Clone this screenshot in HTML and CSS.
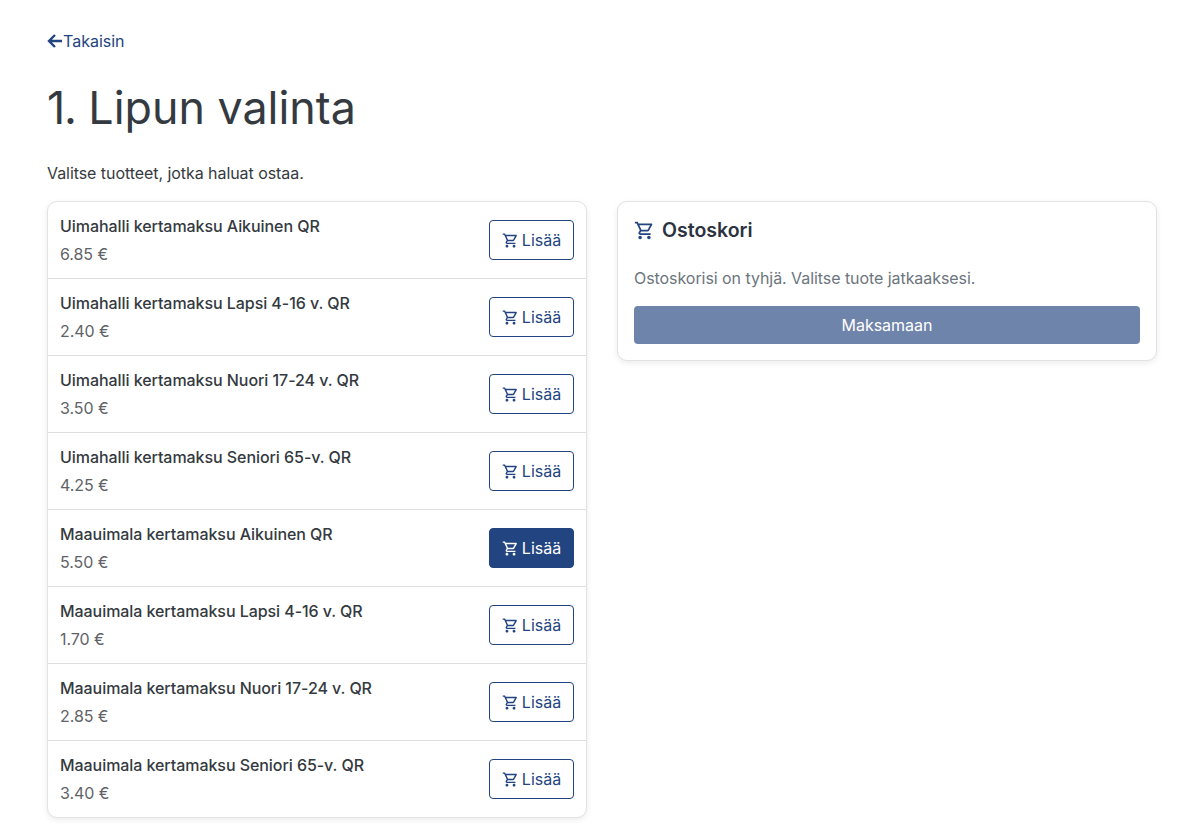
FILE: index.html
```html
<!DOCTYPE html>
<html lang="fi">
<head>
  <meta charset="UTF-8">
  <meta name="viewport" content="width=device-width, initial-scale=1.0">
  <title>Lipun valinta</title>
  <link rel="stylesheet" href="styles.css">
</head>
<body>
  <svg class="icon-defs" width="0" height="0" aria-hidden="true">
    <symbol id="cart" viewBox="0 0 24 24">
      <path d="M15.55 13c.75 0 1.41-.41 1.75-1.03l3.58-6.49c.37-.66-.11-1.48-.87-1.48H5.21l-.94-2H1v2h2l3.6 7.59-1.35 2.44C4.52 15.37 5.48 17 7 17h12v-2H7l1.1-2h7.45zM6.16 6h12.15l-2.76 5H8.53L6.16 6zM7 18c-1.1 0-1.99.9-1.99 2S5.9 22 7 22s2-.9 2-2-.9-2-2-2zm10 0c-1.1 0-1.99.9-1.99 2s.89 2 1.99 2 2-.9 2-2-.9-2-2-2z"/>
    </symbol>
  </svg>

  <main class="page">
    <a href="#" class="back-link">
      <svg class="back-icon" viewBox="0 0 16 16"><path d="M15 8H2M8 2L2 8l6 6"/></svg>
      Takaisin
    </a>

    <h1><span class="step-number">1.</span> Lipun valinta</h1>
    <p class="intro">Valitse tuotteet, jotka haluat ostaa.</p>

    <div class="columns">
      <ul class="card product-list">
        <li class="product">
          <div><div class="product-name">Uimahalli kertamaksu Aikuinen QR</div><div class="product-price">6.85 €</div></div>
          <button class="add-button"><svg class="cart-icon"><use href="#cart"/></svg>Lisää</button>
        </li>
        <li class="product">
          <div><div class="product-name">Uimahalli kertamaksu Lapsi 4-16 v. QR</div><div class="product-price">2.40 €</div></div>
          <button class="add-button"><svg class="cart-icon"><use href="#cart"/></svg>Lisää</button>
        </li>
        <li class="product">
          <div><div class="product-name">Uimahalli kertamaksu Nuori 17-24 v. QR</div><div class="product-price">3.50 €</div></div>
          <button class="add-button"><svg class="cart-icon"><use href="#cart"/></svg>Lisää</button>
        </li>
        <li class="product">
          <div><div class="product-name">Uimahalli kertamaksu Seniori 65-v. QR</div><div class="product-price">4.25 €</div></div>
          <button class="add-button"><svg class="cart-icon"><use href="#cart"/></svg>Lisää</button>
        </li>
        <li class="product">
          <div><div class="product-name">Maauimala kertamaksu Aikuinen QR</div><div class="product-price">5.50 €</div></div>
          <button class="add-button add-button-active"><svg class="cart-icon"><use href="#cart"/></svg>Lisää</button>
        </li>
        <li class="product">
          <div><div class="product-name">Maauimala kertamaksu Lapsi 4-16 v. QR</div><div class="product-price">1.70 €</div></div>
          <button class="add-button"><svg class="cart-icon"><use href="#cart"/></svg>Lisää</button>
        </li>
        <li class="product">
          <div><div class="product-name">Maauimala kertamaksu Nuori 17-24 v. QR</div><div class="product-price">2.85 €</div></div>
          <button class="add-button"><svg class="cart-icon"><use href="#cart"/></svg>Lisää</button>
        </li>
        <li class="product">
          <div><div class="product-name">Maauimala kertamaksu Seniori 65-v. QR</div><div class="product-price">3.40 €</div></div>
          <button class="add-button"><svg class="cart-icon"><use href="#cart"/></svg>Lisää</button>
        </li>
      </ul>

      <section class="card basket">
        <h2><svg class="basket-icon"><use href="#cart"/></svg>Ostoskori</h2>
        <p class="basket-empty">Ostoskorisi on tyhjä. Valitse tuote jatkaaksesi.</p>
        <button class="pay-button">Maksamaan</button>
      </section>
    </div>
  </main>
</body>
</html>
```

FILE: styles.css
```css
* {
  box-sizing: border-box;
  margin: 0;
  padding: 0;
}

body {
  font-family: 'Inter', sans-serif;
  font-size: 16px;
  line-height: 24px;
  letter-spacing: -0.06px;
  background-color: #fff;
  color: #343a40;
}

.icon-defs {
  display: block;
}

.page {
  padding: 29px 33px 16px 47px;
}

.back-link {
  display: flex;
  align-items: center;
  font-size: 16px;
  line-height: 24px;
  letter-spacing: 0;
  color: #224480;
  text-decoration: none;
}

.back-icon {
  width: 16px;
  height: 16px;
  fill: none;
  stroke: #224480;
  stroke-width: 2.4;
}

h1 {
  font-size: 44.8px;
  font-weight: 400;
  line-height: 53px;
  margin-top: 29px;
  letter-spacing: 0;
}

.step-number {
  letter-spacing: -1.2px;
}

.intro {
  font-size: 16px;
  line-height: 24px;
  margin-top: 26px;
  margin-bottom: 16px;
}

.columns {
  display: grid;
  grid-template-columns: 540px 540px;
  gap: 30px;
  align-items: start;
}

.card {
  background-color: #fff;
  border: 1px solid #e2e2e2;
  border-radius: 10px;
  box-shadow: 0 2px 6px rgba(0, 0, 0, 0.08);
}

.product-list {
  list-style: none;
}

.product {
  display: flex;
  justify-content: space-between;
  align-items: center;
  height: 77px;
  padding: 0 12px;
  border-bottom: 1px solid #dedede;
}

.product:last-child {
  border-bottom: none;
  height: 76px;
}

.product-name {
  font-size: 16px;
  font-weight: 500;
  line-height: 21px;
  color: #343a40;
}

.product-price {
  font-size: 16px;
  line-height: 21px;
  margin-top: 7px;
  color: #5f6368;
}

.add-button {
  display: flex;
  align-items: center;
  justify-content: center;
  gap: 3px;
  width: 85px;
  height: 40px;
  font-family: inherit;
  font-size: 16px;
  color: #224480;
  background-color: #fff;
  border: 1px solid #224480;
  border-radius: 4px;
}

.add-button-active {
  background-color: #224480;
  color: #fff;
}

.cart-icon {
  width: 17px;
  height: 17px;
  margin-top: 1px;
  fill: currentColor;
}

.basket {
  padding: 15px 16px 16px;
}

.basket h2 {
  display: flex;
  align-items: center;
  gap: 7px;
  height: 26px;
  font-size: 19.5px;
  font-weight: 600;
  line-height: 26px;
  letter-spacing: 0;
  color: #2b3340;
}

.basket-icon {
  width: 21px;
  height: 21px;
  fill: #224480;
}

.basket-empty {
  font-size: 16px;
  line-height: 21px;
  margin-top: 25px;
  color: #6c757d;
}

.pay-button {
  display: block;
  width: 100%;
  height: 38px;
  margin-top: 17px;
  font-family: inherit;
  font-size: 16px;
  color: #fff;
  background-color: #6f84aa;
  border: none;
  border-radius: 4px;
}
```
